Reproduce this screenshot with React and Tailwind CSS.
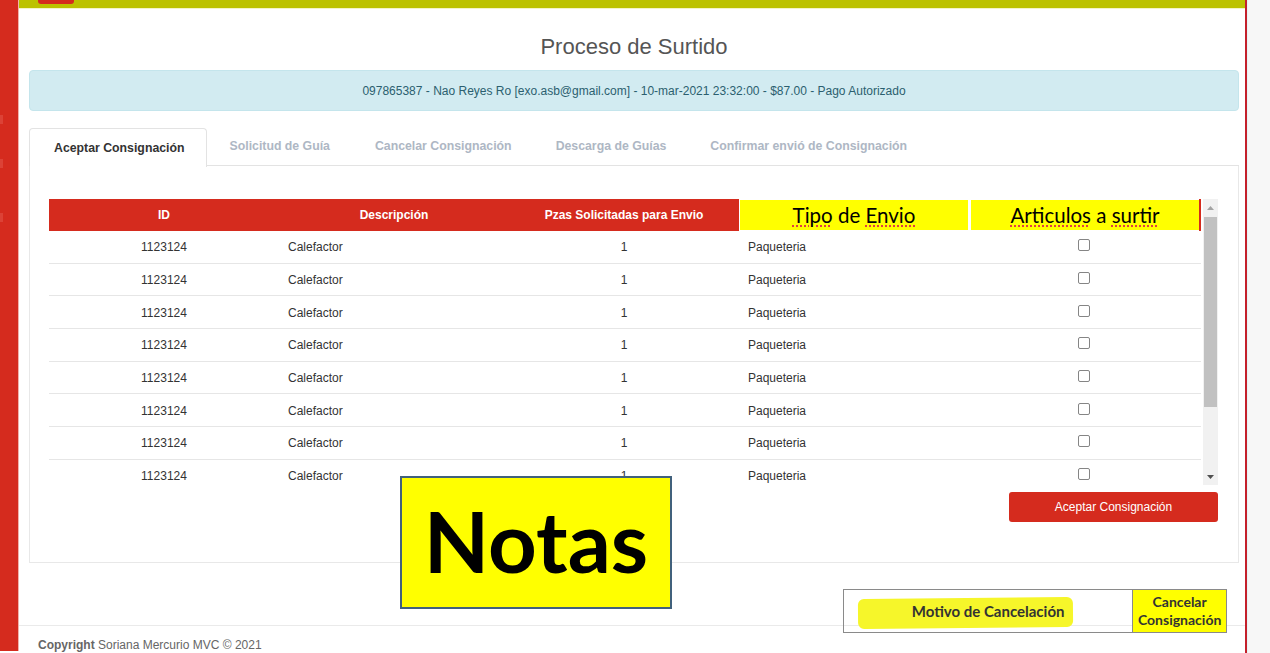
import React from "react";

const rows = Array.from({ length: 8 });

function Checkbox() {
  return <div className="w-[12px] h-[12px] rounded-[2px] border border-[#858585] bg-white" />;
}

export default function App() {
  return (
    <div className="relative w-[1270px] h-[653px] overflow-hidden flex items-start bg-white font-['Liberation_Sans',Arial,sans-serif] text-[#333]">
      {/* left sidebar */}
      <div className="w-[19px] h-[651px] shrink-0 bg-[#d52b1e] border-r border-[#f1b3ab] flex flex-col">
        <div className="mt-[115px] w-[3px] h-[9px] bg-[#e35a4e] opacity-50" />
        <div className="mt-[35px] w-[3px] h-[9px] bg-[#e35a4e] opacity-50" />
        <div className="mt-[45px] w-[3px] h-[9px] bg-[#e35a4e] opacity-50" />
      </div>

      {/* main */}
      <div className="w-[1226px] h-[653px] shrink-0 flex flex-col">
        <div className="h-[9px] shrink-0 bg-[#bcc200] border-b border-[#f3f4c8] flex">
          <div className="ml-[19px] w-[36px] h-[4px] bg-[#d52b1e] rounded-b-[3px]" />
        </div>

        <div className="shrink-0 pl-[10px] pr-[6px] flex flex-col">
          <div className="mt-[23px] h-[30px] shrink-0 leading-[30px] text-center text-[22px] text-[#555]">
            Proceso de Surtido
          </div>

          <div className="mt-[8px] h-[41px] shrink-0 rounded-[4px] bg-[#d2ebf1] border border-[#c4e5ec] flex items-center justify-center text-[12px] text-[#2b5f6f]">
            097865387 - Nao Reyes Ro [exo.asb@gmail.com] - 10-mar-2021 23:32:00 - $87.00 - Pago Autorizado
          </div>

          {/* tabs */}
          <div className="mt-[17px] h-[38px] shrink-0 flex border-b border-[#e3e3e3]">
            <div className="h-[39px] -mb-px pl-[24px] pr-[21px] flex items-center bg-white border border-b-0 border-[#e3e3e3] rounded-t-[4px] text-[12.3px] font-bold text-[#333]">
              Aceptar Consignación
            </div>
            <div className="px-[23px] flex items-center text-[12.3px] font-bold text-[#aeb7c4]">Solicitud de Guía</div>
            <div className="px-[22px] flex items-center text-[12.3px] font-bold text-[#aeb7c4]">Cancelar Consignación</div>
            <div className="px-[22px] flex items-center text-[12.3px] font-bold text-[#aeb7c4]">Descarga de Guías</div>
            <div className="px-[22px] flex items-center text-[12.3px] font-bold text-[#aeb7c4]">Confirmar envió de Consignación</div>
          </div>

          {/* panel */}
          <div className="h-[397px] shrink-0 border border-t-0 border-[#e8e8e8] pt-[33px] pl-[19px] pr-[20px] flex flex-col">
            <div className="h-[286px] shrink-0 flex">
              <div className="w-[1152px] h-[286px] overflow-hidden flex flex-col">
                <div className="h-[32px] shrink-0 bg-[#d52b1e] flex text-white text-[12px] font-bold">
                  <div className="w-[230px] flex items-center justify-center">ID</div>
                  <div className="w-[230px] flex items-center justify-center">Descripción</div>
                  <div className="w-[230px] flex items-center justify-center">Pzas Solicitadas para Envio</div>
                  <div className="w-[230px] p-[1px] bg-white">
                    <div className="h-full bg-[#ffff00] flex items-center justify-center font-['Lato',sans-serif] font-normal text-[20.5px] text-black">
                      <span className="underline decoration-dotted decoration-[#e04040] underline-offset-[3px]">Tipo</span>
                      <span>&nbsp;de&nbsp;</span>
                      <span className="underline decoration-dotted decoration-[#e04040] underline-offset-[3px]">Envio</span>
                    </div>
                  </div>
                  <div className="w-[230px] py-[1px] pl-[2px] bg-white">
                    <div className="h-full bg-[#ffff00] flex items-center justify-center font-['Lato',sans-serif] font-normal text-[20.5px] text-black">
                      <span className="underline decoration-dotted decoration-[#e04040] underline-offset-[3px]">Articulos</span>
                      <span>&nbsp;a&nbsp;</span>
                      <span className="underline decoration-dotted decoration-[#e04040] underline-offset-[3px]">surtir</span>
                    </div>
                  </div>
                  <div className="w-[2px] bg-[#d52b1e]" />
                </div>
                {rows.map((_, i) => (
                  <div key={i} className="h-[32.7px] shrink-0 border-b border-[#e6e6e6] flex text-[12px] text-[#333]">
                    <div className="w-[230px] flex items-center justify-center pt-[1px]">1123124</div>
                    <div className="w-[230px] flex items-center pl-[9px] pt-[1px]">Calefactor</div>
                    <div className="w-[230px] flex items-center justify-center pt-[1px]">1</div>
                    <div className="w-[230px] flex items-center pl-[9px] pt-[1px]">Paqueteria</div>
                    <div className="w-[230px] flex items-center justify-center pb-[3px]">
                      <Checkbox />
                    </div>
                  </div>
                ))}
              </div>
              {/* scrollbar */}
              <div className="ml-[2px] w-[15px] h-[286px] bg-[#f1f1f1] flex flex-col">
                <div className="h-[18px] flex items-center justify-center">
                  <svg width="7" height="4" viewBox="0 0 7 4"><path d="M0 4 L3.5 0 L7 4 Z" fill="#a3a3a3" /></svg>
                </div>
                <div className="h-[190px] mx-[1px] bg-[#c1c1c1]" />
                <div className="flex-1" />
                <div className="h-[17px] flex items-center justify-center">
                  <svg width="7" height="4" viewBox="0 0 7 4"><path d="M0 0 L7 0 L3.5 4 Z" fill="#505050" /></svg>
                </div>
              </div>
            </div>
            <div className="mt-[7px] flex justify-end">
              <div className="w-[209px] h-[30px] rounded-[3px] bg-[#d52b1e] flex items-center justify-center text-white text-[12px]">
                Aceptar Consignación
              </div>
            </div>
          </div>
        </div>

        {/* footer */}
        <div className="mt-[62px] shrink-0 border-t border-[#eaeaea] pl-[19px] pt-[10px] text-[12px] text-[#666]">
          <span className="font-bold">Copyright</span> Soriana Mercurio MVC © 2021
        </div>
      </div>

      <div className="w-[2px] h-[653px] shrink-0 bg-[#c4202b]" />
      <div className="flex-1 h-[653px] bg-[#f7f7f7] border-l border-[#e4f4f6]" />

      {/* Notas overlay */}
      <div className="absolute left-[400px] top-[476px] w-[272px] h-[133px] bg-[#ffff00] border-2 border-[#41617c] flex items-center justify-center">
        <span className="font-['Lato',sans-serif] font-bold text-[85px] leading-none text-black -mt-[4px]">Notas</span>
      </div>

      {/* Motivo de Cancelación overlay */}
      <div className="absolute left-[843px] top-[589px] w-[384px] h-[44px] flex border border-[#8a8a8a]">
        <div className="relative w-[289px] h-full flex items-center justify-center">
          <div className="absolute left-[14px] top-[8px] w-[215px] h-[30px] bg-[#f6f62a] rounded-[6px] -rotate-[0.5deg]" />
          <span className="relative font-['Lato',sans-serif] font-bold text-[15px] text-[#333]">Motivo de Cancelación</span>
        </div>
        <div className="w-[94px] h-full bg-[#ffff00] border-l border-[#8a8a8a] flex flex-col items-center justify-center font-['Lato',sans-serif] font-bold text-[14px] leading-[18px] text-[#333]">
          <span>Cancelar</span>
          <span>Consignación</span>
        </div>
      </div>
    </div>
  );
}
